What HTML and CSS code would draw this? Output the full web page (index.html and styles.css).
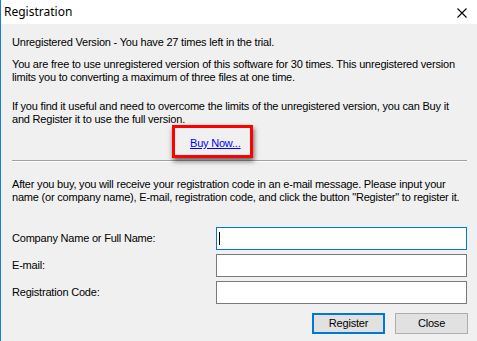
FILE: index.html
```
<!DOCTYPE html>
<html>
<head>
<meta charset="utf-8">
<link rel="stylesheet" href="styles.css">
</head>
<body>
<div class="window">
  <div class="titlebar">
    <span class="title">Registration</span>
    <svg class="close" width="10" height="10" viewBox="0 0 10 10"><path d="M0.5 0.5 L9.5 9.5 M9.5 0.5 L0.5 9.5" stroke="#000" stroke-width="1.1" fill="none"/></svg>
  </div>
  <div class="content">
    <p class="p1">Unregistered Version - You have 27 times left in the trial.</p>
    <p class="p2">You are free to use unregistered version of this software for 30 times. This unregistered version<br>limits you to converting a maximum of three files at one time.</p>
    <p class="p3">If you find it useful and need to overcome the limits of the unregistered version, you can Buy it<br>and Register it to use the full version.</p>
    <div class="buyrow">
      <a class="buy" href="#">Buy Now...</a>
      <span class="highlight"></span>
    </div>
    <div class="sep"></div>
    <p class="p4">After you buy, you will receive your registration code in an e-mail message. Please input your<br>name (or company name), E-mail, registration code, and click the button "Register" to register it.</p>
    <div class="form">
      <label class="lbl">Company Name or Full Name:</label>
      <div class="input focus"><span class="caret"></span></div>
      <label class="lbl">E-mail:</label>
      <div class="input"></div>
      <label class="lbl">Registration Code:</label>
      <div class="input"></div>
    </div>
    <div class="buttons">
      <div class="btn default">Register</div>
      <div class="btn">Close</div>
    </div>
  </div>
</div>
</body>
</html>
```
FILE: styles.css
```
html, body {
  margin: 0;
  padding: 0;
  background: #f0f0f0;
}
.window {
  width: 477px;
  height: 341px;
  box-sizing: border-box;
  border-left: 1px solid #1a7fd4;
  background: #f0f0f0;
  display: flex;
  flex-direction: column;
  overflow: hidden;
}
.titlebar {
  height: 24px;
  background: #ffffff;
  display: flex;
  align-items: center;
  justify-content: space-between;
  padding: 0 10px 0 3px;
  flex: none;
}
.title {
  font-family: "Noto Sans", sans-serif;
  font-size: 12px;
  color: #000;
  line-height: 24px;
}
.close {
  display: block;
  margin-top: 1px;
}
.content {
  padding: 12px 9px 0 11px;
  font-family: "Liberation Sans", Arial, sans-serif;
  font-size: 11px;
  letter-spacing: -0.2px;
  line-height: 13px;
  color: #000;
}
p {
  margin: 0;
  white-space: nowrap;
}
.p2 { margin-top: 9px; }
.p3 { margin-top: 16px; }
.buyrow {
  position: relative;
  margin-top: 11px;
  padding-left: 178px;
  height: 13px;
}
.buy {
  color: #0000ff;
  text-decoration: underline;
}
.highlight {
  position: absolute;
  left: 160px;
  top: -12px;
  width: 75px;
  height: 27px;
  border: 3px solid #ff0000;
  box-shadow: 1px 3px 5px rgba(0,0,0,0.6);
}
.sep {
  margin-top: 10px;
  height: 1px;
  background: #a0a0a0;
  border-bottom: 1px solid #ffffff;
  width: 455px;
}
.p4 { margin-top: 16px; }
.form {
  margin-top: 23px;
  display: grid;
  grid-template-columns: 204px 251px;
  row-gap: 4px;
  align-items: center;
}
.input {
  height: 23px;
  box-sizing: border-box;
  border: 1px solid #7a7a7a;
  background: #fff;
  position: relative;
}
.input.focus {
  border-color: #0078d7;
}
.caret {
  position: absolute;
  left: 2px;
  top: 4px;
  width: 1px;
  height: 13px;
  background: #000;
}
.buttons {
  margin-top: 9px;
  display: flex;
  justify-content: flex-end;
  gap: 10px;
}
.btn {
  width: 73px;
  height: 21px;
  box-sizing: border-box;
  border: 1px solid #adadad;
  background: #e1e1e1;
  display: flex;
  align-items: center;
  justify-content: center;
}
.btn.default {
  border: 2px solid #0078d7;
}
```
